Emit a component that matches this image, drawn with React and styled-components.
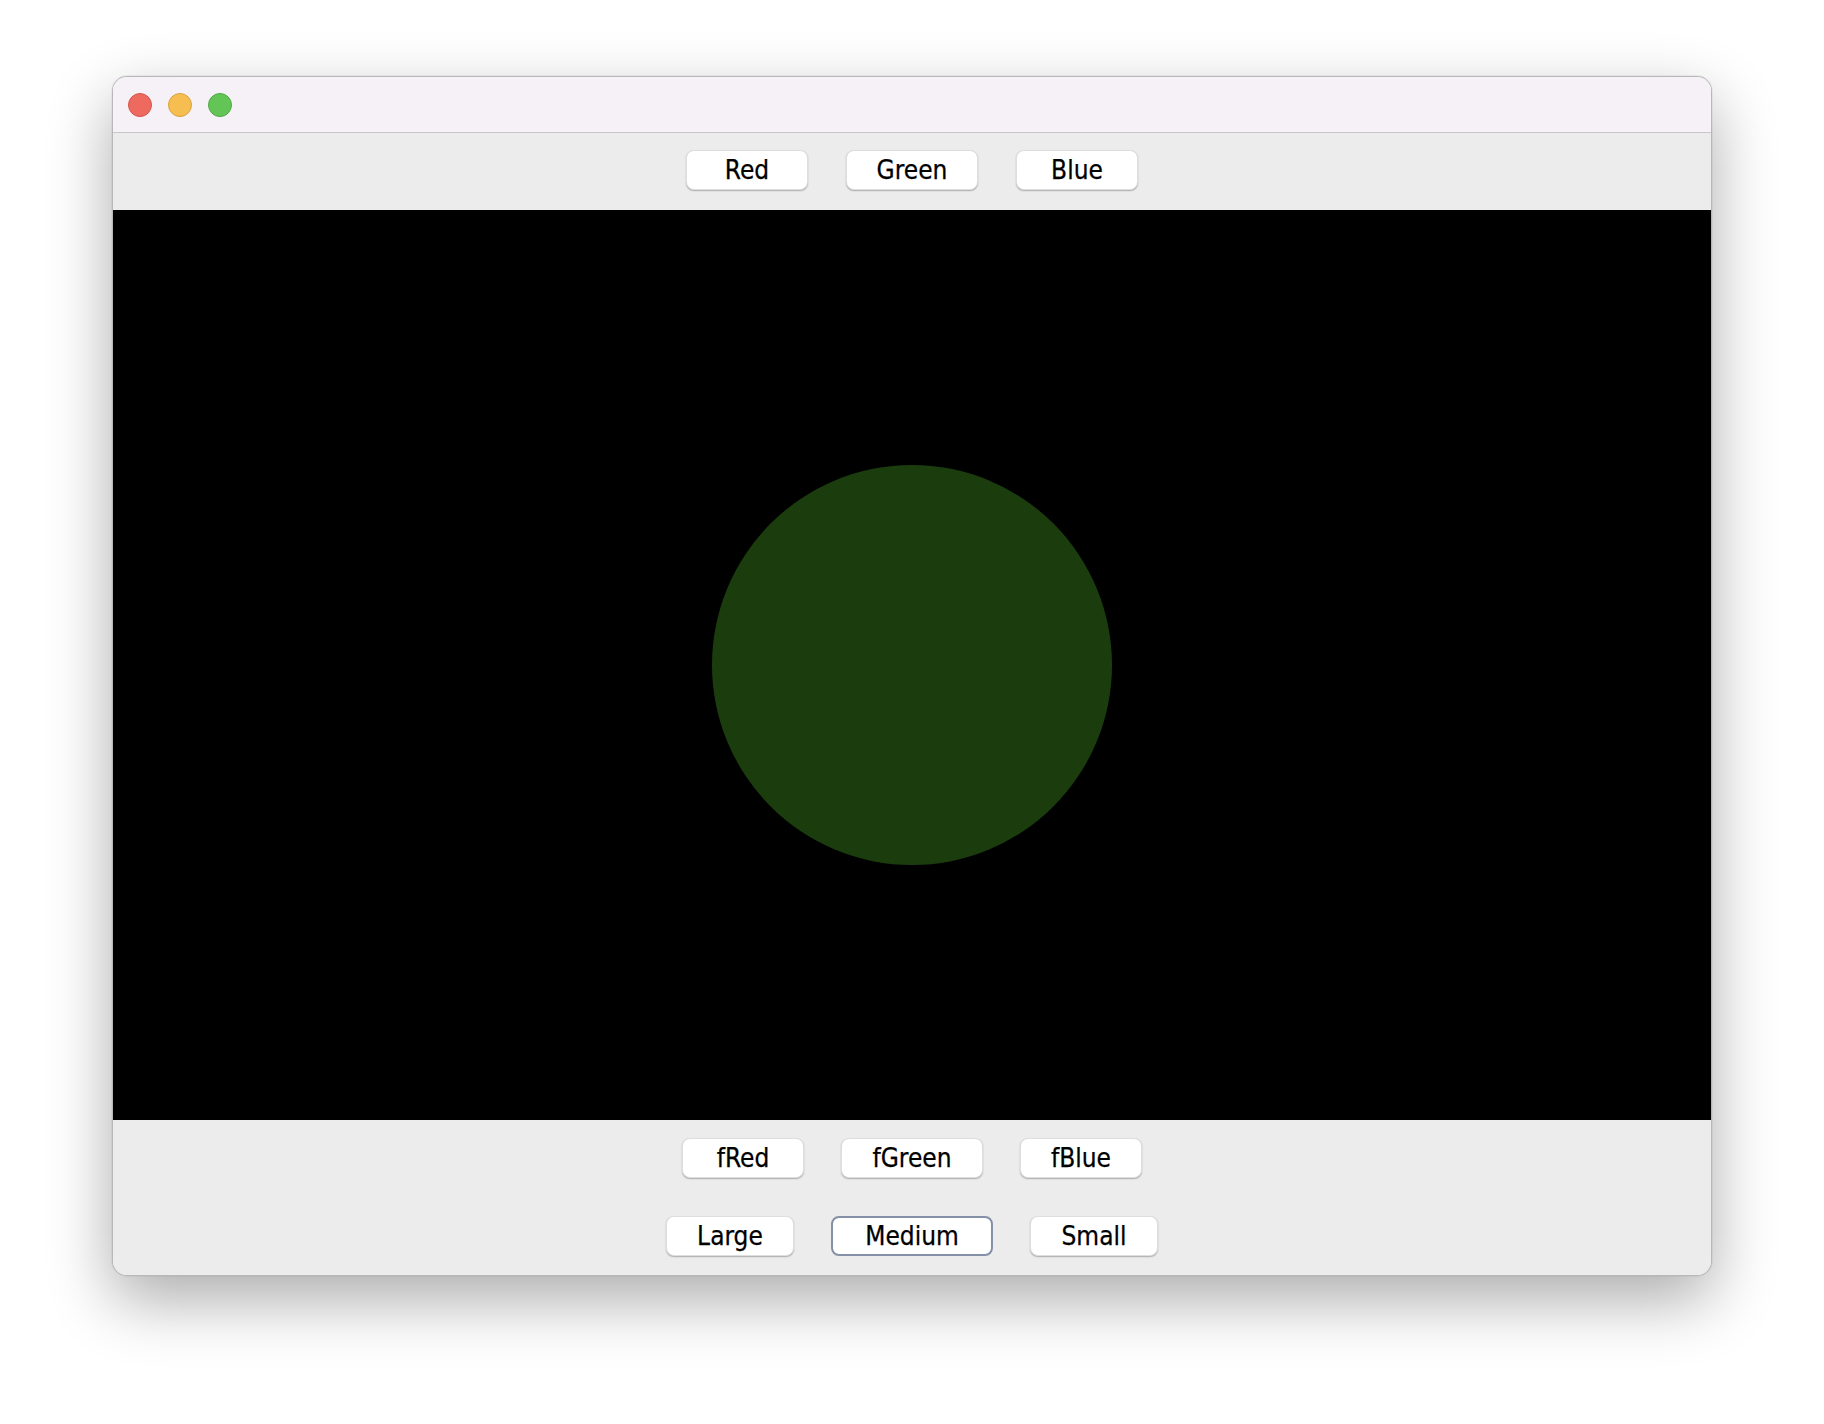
import React from "react";
import styled, { createGlobalStyle } from "styled-components";

const Global = createGlobalStyle`
  html, body {
    margin: 0;
    padding: 0;
    background: #ffffff;
  }
  #root {
    width: 1824px;
    height: 1424px;
  }
`;

const Stage = styled.div`
  width: 1824px;
  height: 1424px;
  box-sizing: border-box;
  padding-top: 76px;
  display: flex;
  justify-content: center;
  align-items: flex-start;
  background: #ffffff;
`;

const Window = styled.div`
  width: 1600px;
  height: 1200px;
  box-sizing: border-box;
  border-radius: 15px;
  border: 1px solid rgba(0, 0, 0, 0.22);
  overflow: hidden;
  display: flex;
  flex-direction: column;
  background: #ececec;
  box-shadow: 0 24px 64px rgba(0, 0, 0, 0.33), 0 0 0 1px rgba(0, 0, 0, 0.04);
`;

const TitleBar = styled.div`
  height: 55px;
  flex: none;
  background: #f6f1f7;
  border-bottom: 1px solid #c9c6cb;
  display: flex;
  align-items: center;
  gap: 16px;
  padding-left: 15px;
`;

const Light = styled.span`
  width: 24px;
  height: 24px;
  box-sizing: border-box;
  border-radius: 50%;
  background: ${(p) => p.$fill};
  border: 1px solid ${(p) => p.$edge};
`;

const Toolbar = styled.div`
  flex: none;
  height: 77px;
  box-sizing: border-box;
  padding-top: 17px;
  display: flex;
  justify-content: center;
  align-items: flex-start;
  gap: 38px;
  background: #ececec;
`;

const Canvas = styled.div`
  flex: 1;
  background: #000000;
  display: flex;
  align-items: center;
  justify-content: center;
`;

const Ball = styled.div`
  width: ${(p) => p.$size}px;
  height: ${(p) => p.$size}px;
  border-radius: 50%;
  background: ${(p) => p.$color};
`;

const Controls = styled.div`
  flex: none;
  height: 155px;
  box-sizing: border-box;
  padding-top: 18px;
  display: flex;
  flex-direction: column;
  align-items: center;
  gap: 38px;
  background: #ececec;
`;

const Row = styled.div`
  display: flex;
  justify-content: center;
  gap: 37px;
`;

const Button = styled.button`
  width: ${(p) => p.$w}px;
  height: 40px;
  box-sizing: border-box;
  padding: 0;
  background: #ffffff;
  border-radius: 8px;
  border: ${(p) => (p.$focused ? "2px solid #8390a5" : "1px solid #dedede")};
  box-shadow: ${(p) =>
    p.$focused ? "none" : "0 1px 1.5px rgba(0, 0, 0, 0.28)"};
  font-family: "DejaVu Sans Condensed", "DejaVu Sans", sans-serif;
  font-size: 26px;
  color: #000000;
  -webkit-text-stroke: 0.25px #000000;
  line-height: 1;
  display: flex;
  align-items: center;
  justify-content: center;
  cursor: pointer;
`;

export default function App() {
  return (
    <>
      <Global />
      <Stage>
        <Window>
          <TitleBar>
            <Light $fill="#ee6a5f" $edge="#d4564c" />
            <Light $fill="#f6be50" $edge="#d9a23f" />
            <Light $fill="#62c555" $edge="#4fa944" />
          </TitleBar>
          <Toolbar>
            <Button $w={122}>Red</Button>
            <Button $w={132}>Green</Button>
            <Button $w={122}>Blue</Button>
          </Toolbar>
          <Canvas>
            <Ball $size={400} $color="#1b3d0e" />
          </Canvas>
          <Controls>
            <Row>
              <Button $w={122}>fRed</Button>
              <Button $w={142}>fGreen</Button>
              <Button $w={122}>fBlue</Button>
            </Row>
            <Row>
              <Button $w={128}>Large</Button>
              <Button $w={162} $focused>
                Medium
              </Button>
              <Button $w={128}>Small</Button>
            </Row>
          </Controls>
        </Window>
      </Stage>
    </>
  );
}
